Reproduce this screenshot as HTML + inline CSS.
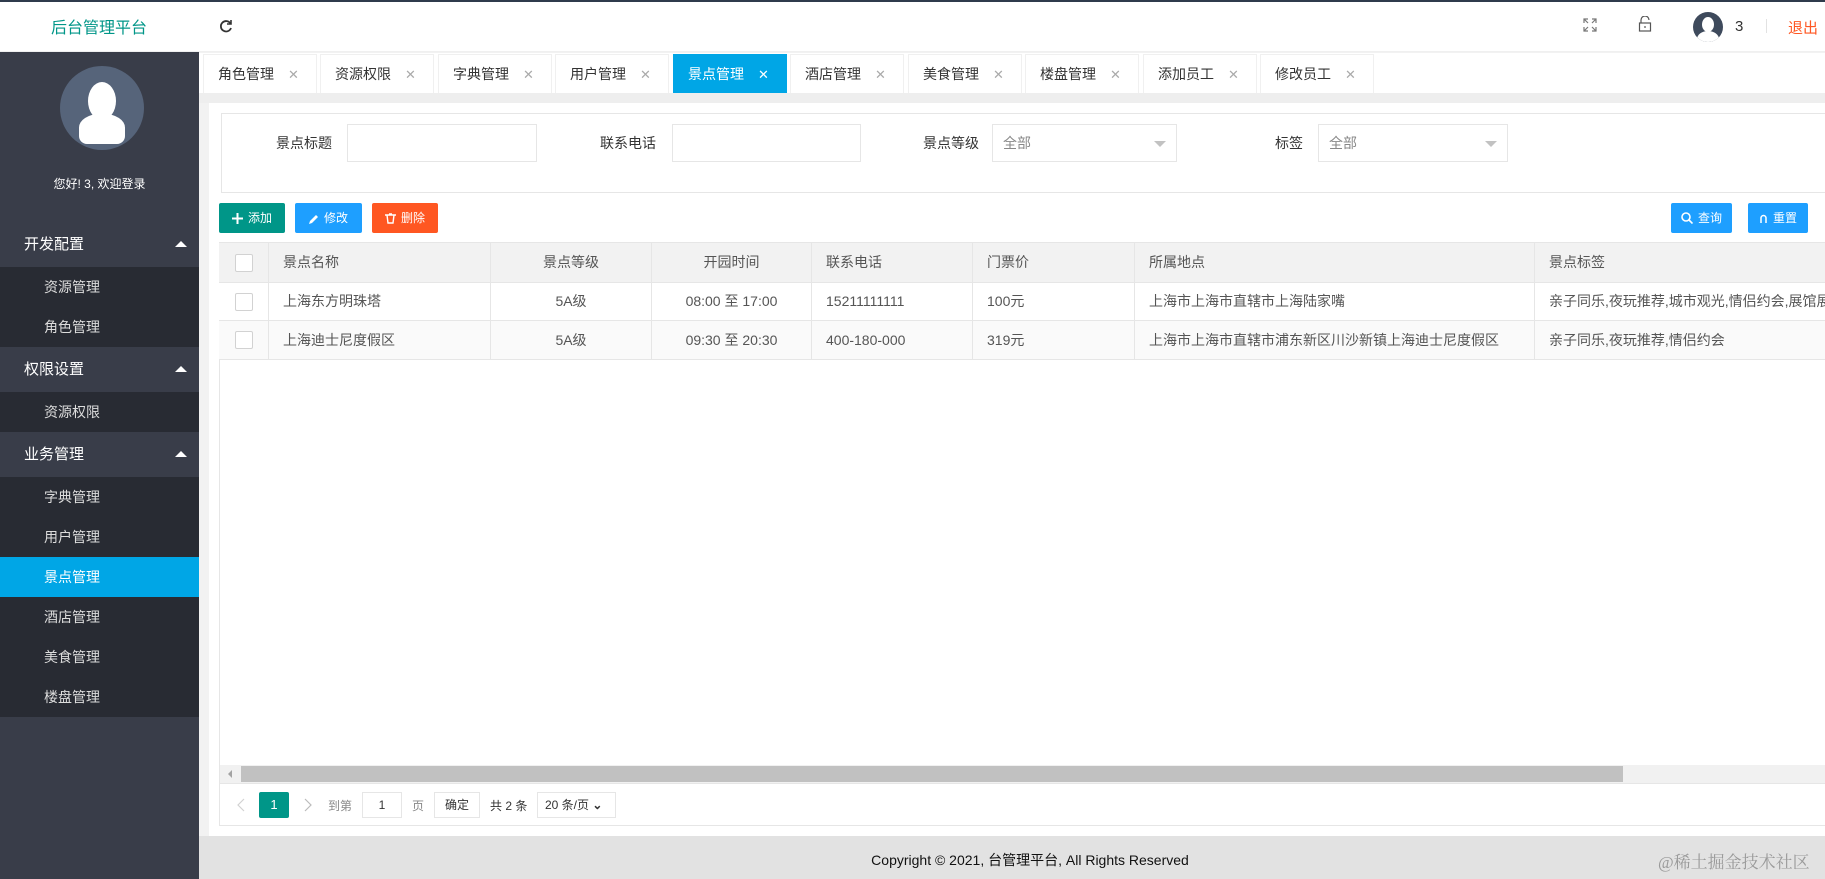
<!DOCTYPE html>
<html><head><meta charset="utf-8"><style>
*{margin:0;padding:0;box-sizing:border-box}
body{width:1825px;height:879px;overflow:hidden;background:#f2f2f2;font-family:"Liberation Sans","Noto Sans CJK SC",sans-serif;font-size:14px;color:#333;position:relative}
.a{position:absolute}
.side{left:0;top:52px;width:199px;height:827px;background:#393d49}
.grp{position:absolute;left:0;width:199px;height:45px;background:#393d49;color:#fff;font-size:15px;line-height:45px;padding-left:24px}
.grp:after{content:"";position:absolute;right:12px;top:19px;border-left:6px solid transparent;border-right:6px solid transparent;border-bottom:6px solid #fff}
.sub{position:absolute;left:0;width:199px;height:40px;background:#282b33;color:#ddd;font-size:14px;line-height:40px;padding-left:44px}
.tab{position:absolute;top:54px;height:39px;width:114px;background:#fff;border:1px solid #f0f0f0;border-bottom:none;font-size:14px;line-height:39px;padding-left:14px;color:#333}
.tab span{color:#aaa;margin-left:14px;font-size:13px}
.tab.on{background:#00a6e6;color:#fff;border-color:#00a6e6}
.tab.on span{color:#fff}
.inp{position:absolute;top:124px;height:38px;border:1px solid #e6e6e6;background:#fff;color:#888;font-size:14px;line-height:36px;padding-left:10px}
.lbl{position:absolute;top:124px;line-height:38px;font-size:14px;color:#333}
.btn{position:absolute;top:203px;height:30px;color:#fff;font-size:12px;line-height:30px;text-align:center;border-radius:2px}
.btn svg{vertical-align:-2px;margin-right:5px}
.tri{position:absolute;right:10px;top:16px;border-left:6px solid transparent;border-right:6px solid transparent;border-top:6px solid #c2c2c2}
.row{position:absolute;left:219px;width:1606px;border-bottom:1px solid #e6e6e6}
.c{position:absolute;top:0;height:100%;border-left:1px solid #e6e6e6;font-size:14px;color:#555;padding-left:14px;white-space:nowrap;overflow:hidden}
.cb{position:absolute;left:16px;width:18px;height:18px;border:1px solid #d2d2d2;background:#fff;border-radius:2px}
</style></head><body>
<div class="a" style="left:0;top:0;width:1825px;height:2px;background:#2f3b4c"></div>
<div class="a" style="left:0;top:2px;width:1825px;height:50px;background:#fff;border-bottom:1px solid #f0f0f0"></div>
<div class="a" style="left:51px;top:14px;font-size:16px;color:#009688">后台管理平台</div>
<svg class="a" style="left:219px;top:19px" width="14" height="14" viewBox="0 0 14 14" fill="none" stroke="#333" stroke-width="1.8"><path d="M11.5 4.5A5.2 5.2 0 1 0 12 9"/><path d="M12 1v4H8" stroke-width="1.6"/></svg>
<svg class="a" style="left:1583px;top:18px" width="14" height="14" viewBox="0 0 14 14" fill="none" stroke="#777" stroke-width="1.2"><path d="M1 5V1h4M9 1h4v4M13 9v4H9M5 13H1V9M1 1l4 4M13 1L9 5M13 13L9 9M1 13l4-4"/></svg>
<svg class="a" style="left:1638px;top:16px" width="14" height="16" viewBox="0 0 14 16" fill="none" stroke="#555" stroke-width="1.2"><path d="M3 7V4a4 4 0 0 1 8 0"/><rect x="1.5" y="7" width="11" height="8"/><path d="M7 10v2"/></svg>
<div class="a" style="left:1693px;top:12px;width:30px;height:30px;border-radius:50%;background:#3e4a5c;overflow:hidden"><div class="a" style="left:9px;top:5px;width:12px;height:15px;border-radius:50%;background:#fff"></div><div class="a" style="left:4px;top:19px;width:22px;height:16px;border-radius:50% 50% 0 0;background:#fff"></div></div>
<div class="a" style="left:1735px;top:18px;font-size:15px;color:#333">3</div>
<div class="a" style="left:1766px;top:19px;width:1px;height:14px;background:#e2e2e2"></div>
<div class="a" style="left:1788px;top:17px;font-size:15px;color:#ff5722">退出</div>

<div class="a side"></div>
<div class="a" style="left:60px;top:66px;width:84px;height:84px;border-radius:50%;background:#56647a;overflow:hidden">
<div class="a" style="left:28px;top:16px;width:28px;height:38px;border-radius:50%;background:#fff"></div>
<div class="a" style="left:19px;top:48px;width:46px;height:30px;border-radius:45% 45% 8px 8px;background:#fff"></div></div>
<div class="a" style="left:0;top:175px;width:199px;text-align:center;color:#fff;font-size:12px">您好! 3, 欢迎登录</div>
<div class="grp" style="top:222px">开发配置</div>
<div class="sub" style="top:267px">资源管理</div>
<div class="sub" style="top:307px">角色管理</div>
<div class="grp" style="top:347px">权限设置</div>
<div class="sub" style="top:392px">资源权限</div>
<div class="grp" style="top:432px">业务管理</div>
<div class="sub" style="top:477px">字典管理</div>
<div class="sub" style="top:517px">用户管理</div>
<div class="sub" style="top:557px;background:#00a6e6;color:#fff">景点管理</div>
<div class="sub" style="top:597px">酒店管理</div>
<div class="sub" style="top:637px">美食管理</div>
<div class="sub" style="top:677px">楼盘管理</div>

<div class="a" style="left:199px;top:53px;width:1626px;height:40px;background:#fff"></div>
<div class="tab" style="left:203px">角色管理<span>✕</span></div>
<div class="tab" style="left:320px">资源权限<span>✕</span></div>
<div class="tab" style="left:438px">字典管理<span>✕</span></div>
<div class="tab" style="left:555px">用户管理<span>✕</span></div>
<div class="tab on" style="left:673px">景点管理<span>✕</span></div>
<div class="tab" style="left:790px">酒店管理<span>✕</span></div>
<div class="tab" style="left:908px">美食管理<span>✕</span></div>
<div class="tab" style="left:1025px">楼盘管理<span>✕</span></div>
<div class="tab" style="left:1143px">添加员工<span>✕</span></div>
<div class="tab" style="left:1260px">修改员工<span>✕</span></div>
<div class="a" style="left:199px;top:93px;width:1626px;height:10px;background:#eee"></div>

<div class="a" style="left:209px;top:103px;width:1616px;height:733px;background:#fff"></div>
<div class="a" style="left:221px;top:113px;width:1604px;height:80px;border:1px solid #e6e6e6;border-right:none"></div>
<div class="lbl" style="left:276px">景点标题</div>
<div class="inp" style="left:347px;width:190px"></div>
<div class="lbl" style="left:600px">联系电话</div>
<div class="inp" style="left:672px;width:189px"></div>
<div class="lbl" style="left:923px">景点等级</div>
<div class="inp" style="left:992px;width:185px">全部<div class="tri"></div></div>
<div class="lbl" style="left:1275px">标签</div>
<div class="inp" style="left:1318px;width:190px">全部<div class="tri"></div></div>

<div class="btn" style="left:219px;width:66px;background:#009688"><svg width="11" height="11" viewBox="0 0 11 11" stroke="#fff" stroke-width="2"><path d="M5.5 0v11M0 5.5h11"/></svg>添加</div>
<div class="btn" style="left:295px;width:67px;background:#1e9fff"><svg width="10" height="10" viewBox="0 0 10 10" fill="#fff"><path d="M0 10l1-3 6-6 2 2-6 6z"/></svg>修改</div>
<div class="btn" style="left:372px;width:66px;background:#ff5722"><svg width="11" height="11" viewBox="0 0 11 11" fill="none" stroke="#fff" stroke-width="1.4"><path d="M0 2h11M4 1h3M2 2l1 8h5l1-8"/></svg>删除</div>
<div class="btn" style="left:1671px;width:61px;background:#1e9fff"><svg width="12" height="12" viewBox="0 0 12 12" fill="none" stroke="#fff" stroke-width="1.6"><circle cx="5" cy="5" r="4"/><path d="M8 8l3.5 3.5"/></svg>查询</div>
<div class="btn" style="left:1748px;width:60px;background:#1e9fff"><svg width="9" height="10" viewBox="0 0 9 10" fill="none" stroke="#fff" stroke-width="1.5"><path d="M2 9V4a2.5 2.5 0 0 1 5 0v5"/></svg>重置</div>

<div class="a" style="left:219px;top:242px;width:1606px;height:584px;border:1px solid #e6e6e6;border-right:none"></div>
<div class="row" style="top:243px;height:40px;background:#f2f2f2">
<div class="cb" style="top:11px"></div>
<div class="c" style="left:49px;line-height:39px">景点名称</div>
<div class="c" style="left:271px;width:161px;line-height:39px;text-align:center;padding:0">景点等级</div>
<div class="c" style="left:432px;width:160px;line-height:39px;text-align:center;padding:0">开园时间</div>
<div class="c" style="left:592px;line-height:39px">联系电话</div>
<div class="c" style="left:753px;line-height:39px">门票价</div>
<div class="c" style="left:915px;line-height:39px">所属地点</div>
<div class="c" style="left:1315px;line-height:39px">景点标签</div></div>
<div class="row" style="top:283px;height:38px;background:#fff">
<div class="cb" style="top:10px"></div>
<div class="c" style="left:49px;line-height:37px">上海东方明珠塔</div>
<div class="c" style="left:271px;width:161px;line-height:37px;text-align:center;padding:0">5A级</div>
<div class="c" style="left:432px;width:160px;line-height:37px;text-align:center;padding:0">08:00 至 17:00</div>
<div class="c" style="left:592px;line-height:37px">15211111111</div>
<div class="c" style="left:753px;line-height:37px">100元</div>
<div class="c" style="left:915px;line-height:37px">上海市上海市直辖市上海陆家嘴</div>
<div class="c" style="left:1315px;line-height:37px">亲子同乐,夜玩推荐,城市观光,情侣约会,展馆展览</div></div>
<div class="row" style="top:321px;height:39px;background:#fafafa">
<div class="cb" style="top:10px"></div>
<div class="c" style="left:49px;line-height:38px">上海迪士尼度假区</div>
<div class="c" style="left:271px;width:161px;line-height:38px;text-align:center;padding:0">5A级</div>
<div class="c" style="left:432px;width:160px;line-height:38px;text-align:center;padding:0">09:30 至 20:30</div>
<div class="c" style="left:592px;line-height:38px">400-180-000</div>
<div class="c" style="left:753px;line-height:38px">319元</div>
<div class="c" style="left:915px;line-height:38px">上海市上海市直辖市浦东新区川沙新镇上海迪士尼度假区</div>
<div class="c" style="left:1315px;line-height:38px">亲子同乐,夜玩推荐,情侣约会</div></div>

<div class="a" style="left:220px;top:765px;width:1605px;height:18px;background:#f1f1f1"></div>
<div class="a" style="left:228px;top:770px;border-top:4px solid transparent;border-bottom:4px solid transparent;border-right:4px solid #a3a3a3"></div>
<div class="a" style="left:241px;top:766px;width:1382px;height:16px;background:#c1c1c1"></div>
<div class="a" style="left:220px;top:783px;width:1605px;height:1px;background:#e6e6e6"></div>

<svg class="a" style="left:237px;top:798px" width="8" height="14" viewBox="0 0 8 14" fill="none" stroke="#d2d2d2" stroke-width="1.2"><path d="M7 1L1 7l6 6"/></svg>
<div class="a" style="left:259px;top:792px;width:30px;height:26px;background:#009688;color:#fff;text-align:center;line-height:26px;font-size:13px;border-radius:2px">1</div>
<svg class="a" style="left:304px;top:798px" width="8" height="14" viewBox="0 0 8 14" fill="none" stroke="#bbb" stroke-width="1.2"><path d="M1 1l6 6-6 6"/></svg>
<div class="a" style="left:328px;top:797px;color:#888;font-size:12px">到第</div>
<div class="a" style="left:362px;top:792px;width:40px;height:26px;border:1px solid #e6e6e6;text-align:center;line-height:24px;font-size:12px">1</div>
<div class="a" style="left:412px;top:797px;color:#888;font-size:12px">页</div>
<div class="a" style="left:434px;top:792px;width:46px;height:26px;border:1px solid #e6e6e6;text-align:center;line-height:24px;font-size:12px">确定</div>
<div class="a" style="left:490px;top:797px;color:#333;font-size:12px">共 2 条</div>
<div class="a" style="left:537px;top:792px;width:79px;height:26px;border:1px solid #e6e6e6;line-height:24px;font-size:12px;padding-left:7px">20 条/页 <b>⌄</b></div>

<div class="a" style="left:199px;top:836px;width:1626px;height:43px;background:#e2e2e2"></div>
<div class="a" style="left:199px;top:850px;width:1626px;text-align:center;font-size:14px;color:#111;padding-left:36px">Copyright © 2021, 台管理平台, All Rights Reserved</div>
<div class="a" style="left:1658px;top:848px;font-size:17px;color:#9a9a9a;font-family:'Liberation Serif','Noto Serif CJK SC',serif">@稀土掘金技术社区</div>
</body></html>
